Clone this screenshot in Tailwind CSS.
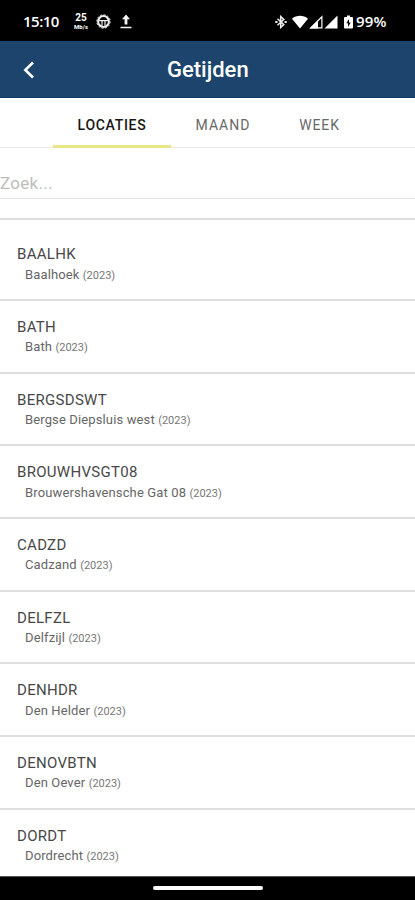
<!DOCTYPE html>
<html lang="nl">
<head>
  <meta charset="UTF-8" />
  <meta name="viewport" content="width=device-width, initial-scale=1.0" />
  <title>Getijden</title>
  <script src="https://cdn.jsdelivr.net/npm/@tailwindcss/browser@4"></script>
</head>
<body class="bg-white font-[Roboto,sans-serif] flex flex-col h-[900px] w-[415px] overflow-hidden">
  <!-- Status bar -->
  <div class="h-[41px] shrink-0 bg-black text-white flex items-center pl-[23px] pr-[27px] pt-[2px] font-['Open_Sans',sans-serif]">
    <span class="w-[51px] text-[15px] leading-none font-semibold tracking-[-0.5px]">15:10</span>
    <div class="w-[14px] flex flex-col items-center text-center font-[Roboto,sans-serif]">
      <span class="text-[10px] leading-[10px] font-bold">25</span>
      <span class="text-[6px] leading-[7px] font-bold">Mb/s</span>
    </div>
    <svg class="ml-[8px] w-[15px] h-[15px]" viewBox="0 0 15 15" fill="none" stroke="#eee">
      <circle cx="7.5" cy="7.5" r="5.4" stroke-width="2" />
      <circle cx="7.5" cy="7.5" r="6.7" stroke-width="1" stroke-dasharray="2 1.5" />
      <path d="M3 6.6h9M6 7v4.8M9 7v4.8" stroke-width="1.2" />
    </svg>
    <svg class="ml-[9px] w-[12px] h-[15px]" viewBox="0 0 12 15" fill="#f5f5f5">
      <path d="M6 .5l4 4.7H7.4V10.5H4.6V5.2H2zM.5 12.7h11v1.5H.5z" />
    </svg>
    <svg class="ml-auto w-[12px] h-[14px]" viewBox="0 0 12 14" fill="none" stroke="#eee" stroke-width="1.5">
      <path d="M2.5 3.8l6.3 5.8L5.7 12.5V1.5l3.1 2.9-6.3 5.8" />
      <path d="M.3 7h2.2M9.5 7h2.2" stroke-width="1.8" />
    </svg>
    <svg class="ml-[5px] w-[16px] h-[14px]" viewBox="0 0 16 14" fill="#fff">
      <path d="M0 3.7C4.6-.1 11.4-.1 16 3.7L8 13.5z" />
    </svg>
    <svg class="ml-[1px] w-[14px] h-[14px]" viewBox="0 0 14 14">
      <path d="M9 5.3V13.5H.5z" fill="#fff" />
      <path d="M1.8 12.9L12.9 1.8v11.1z" fill="none" stroke="#fff" stroke-width="1.2" />
    </svg>
    <svg class="ml-[1px] w-[14px] h-[14px]" viewBox="0 0 14 14" fill="#fff">
      <path d="M.5 13.5L13.5.5v13z" />
    </svg>
    <svg class="ml-[6px] w-[9px] h-[14px]" viewBox="0 0 9 14">
      <path d="M3 .5h3V2h2q1 0 1 1v9.5q0 1-1 1H1q-1 0-1-1V3q0-1 1-1h2z" fill="#fff" />
      <path d="M5 4L2.3 8.3H4V12l2.7-4.5H5z" fill="#000" />
    </svg>
    <span class="ml-[3px] w-[32px] text-[15px] leading-none font-semibold tracking-[0.2px] whitespace-nowrap">99%</span>
  </div>

  <!-- Title bar -->
  <header class="h-[57px] shrink-0 bg-[#1c446c] border-b border-[#103861] flex items-center">
    <svg class="ml-[22px] mt-px w-[14px] h-[18px]" viewBox="0 0 14 18" fill="none" stroke="#fff" stroke-width="2.6">
      <path d="M11 1.5L3.3 9l7.7 7.5" />
    </svg>
    <h1 class="ml-[131px] pt-px text-white text-[22px] leading-none font-medium">Getijden</h1>
  </header>

  <!-- Tabs -->
  <nav class="h-[50px] shrink-0 border-b border-[#e9e9e9] flex pl-[53px] text-[14px] text-[#686868]">
    <div class="w-[118px] h-[50px] pt-[7px] flex items-center justify-center border-b-3 border-[#e6e686] font-medium text-[#161616] tracking-[0.7px]">LOCATIES</div>
    <div class="w-[104px] h-[50px] pt-[4px] flex items-center justify-center tracking-[1px]">MAAND</div>
    <div class="w-[89px] h-[50px] pt-[4px] flex items-center justify-center tracking-[0.9px]">WEEK</div>
  </nav>

  <!-- Search -->
  <div class="h-[72px] shrink-0 border-b-2 border-[#dedede]">
    <input type="text" placeholder="Zoek..." class="block w-full h-[51px] pt-[20px] border-b border-[#e8e8e8] text-[17px] tracking-[0.3px] placeholder:text-[#bdbdbd] outline-none" />
  </div>

  <!-- Locations -->
  <ul id="locations" class="flex-1 overflow-hidden pt-[8.3px]"></ul>

  <!-- Navigation bar -->
  <div class="h-[24px] shrink-0 bg-black border-t border-[#555] flex justify-center pt-[9px]">
    <div class="w-[110px] h-[4px] rounded-full bg-white"></div>
  </div>

  <script>
    const locations = [
      ["BAALHK", "Baalhoek"],
      ["BATH", "Bath"],
      ["BERGSDSWT", "Bergse Diepsluis west"],
      ["BROUWHVSGT08", "Brouwershavensche Gat 08"],
      ["CADZD", "Cadzand"],
      ["DELFZL", "Delfzijl"],
      ["DENHDR", "Den Helder"],
      ["DENOVBTN", "Den Oever"],
      ["DORDT", "Dordrecht"]
    ];

    document.getElementById("locations").innerHTML = locations.map(([code, name]) => `
      <li class="h-[72.7px] pl-[17px] pt-[16px] border-b-2 border-[#dedede]">
        <div class="text-[15px] leading-[20px] text-[#484848] tracking-[0.3px]">${code}</div>
        <div class="pl-[8px] pt-[0.3px] text-[13px] leading-[20px] text-[#666] tracking-[0.13px]">${name} <span class="text-[11px] text-[#777] tracking-[0px]">(2023)</span></div>
      </li>`).join("");
  </script>
</body>
</html>
